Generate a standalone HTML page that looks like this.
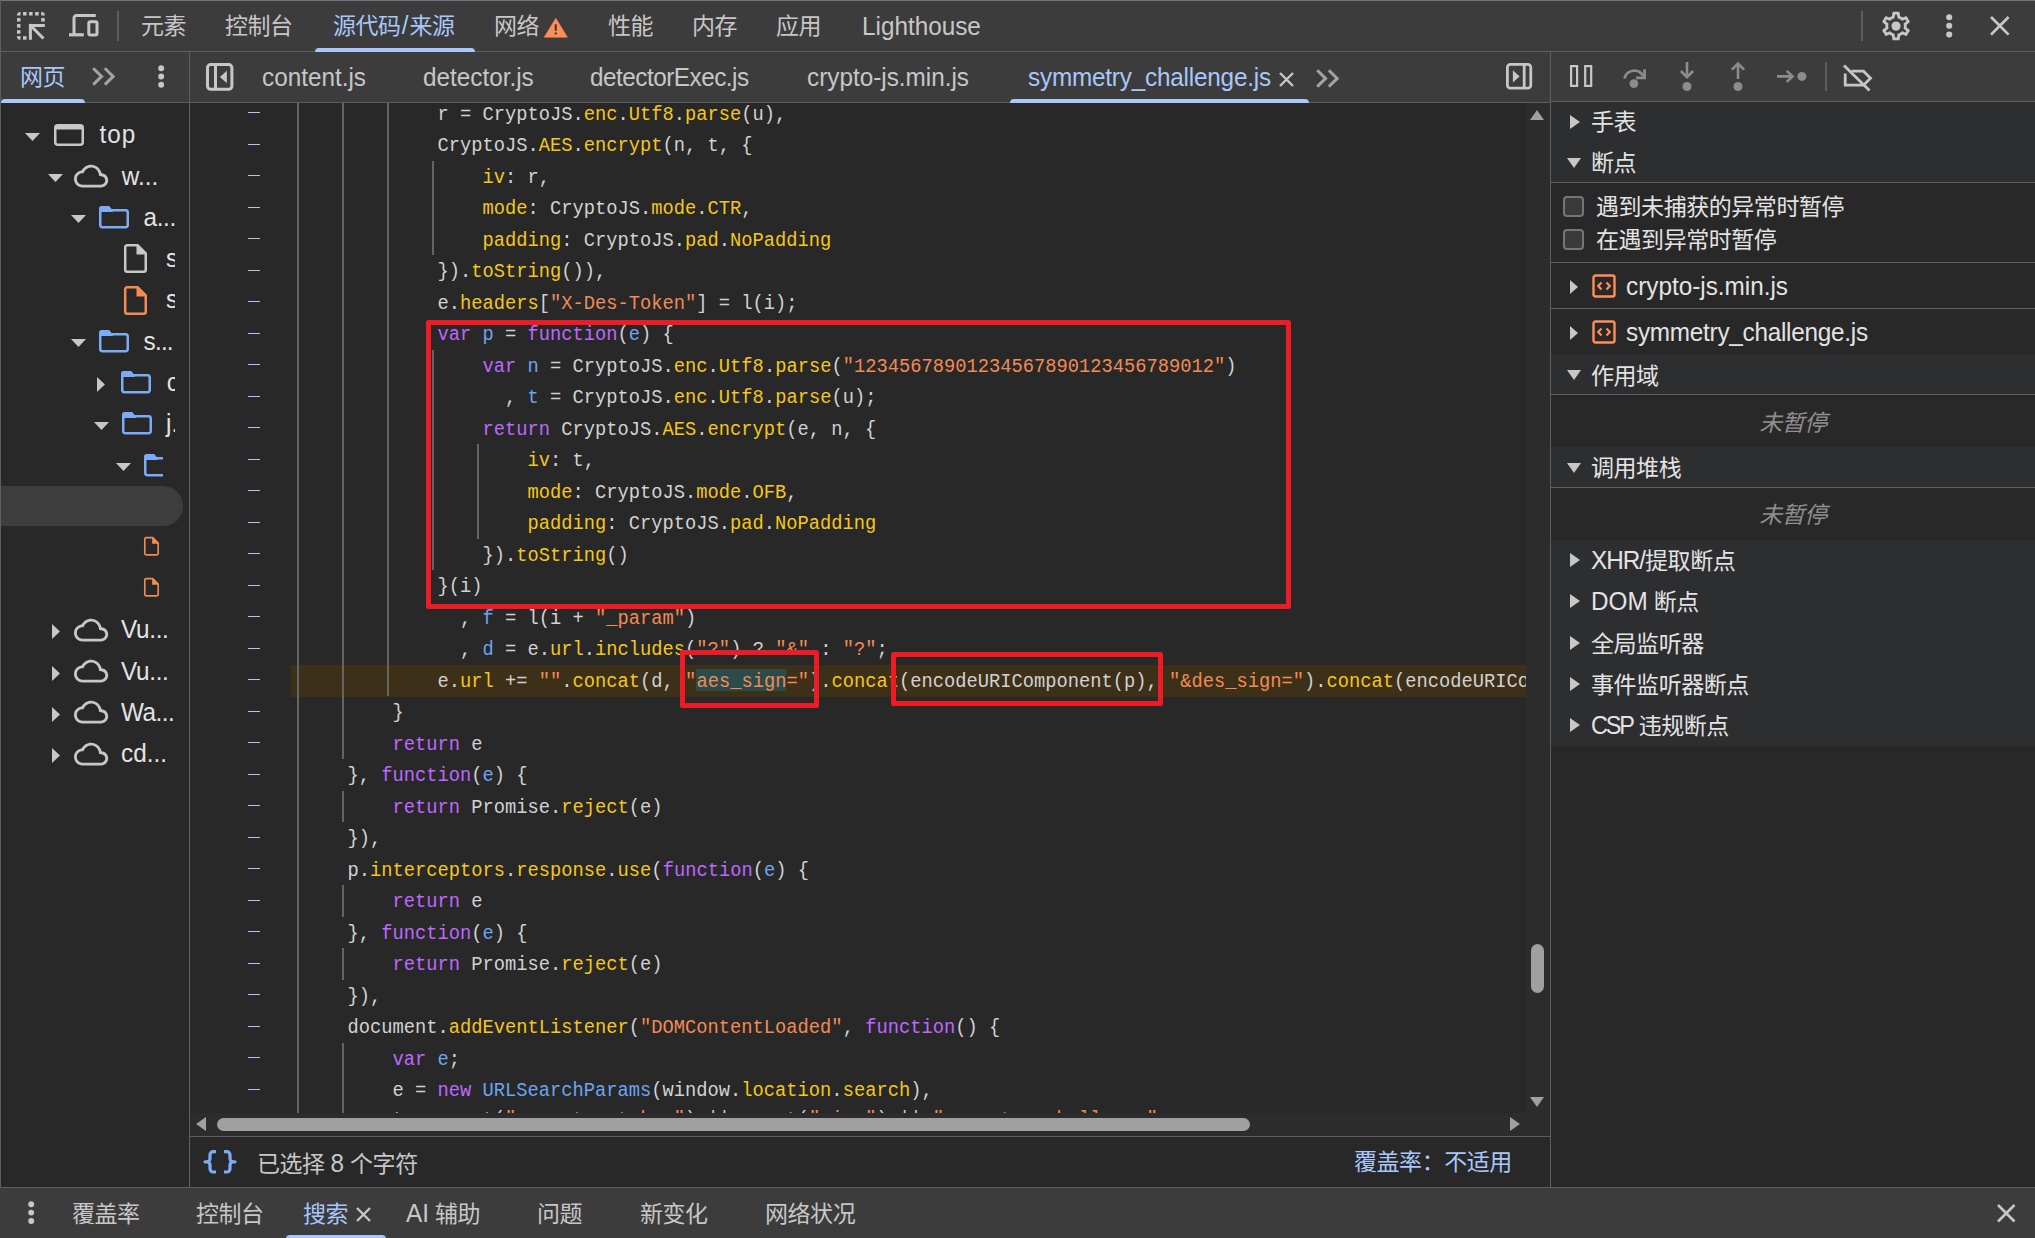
<!DOCTYPE html>
<html lang="zh-CN">
<head>
<meta charset="utf-8">
<title>DevTools</title>
<style>
*{box-sizing:border-box;margin:0;padding:0}
html,body{width:2035px;height:1238px;overflow:hidden;background:#282828}
body{position:relative;letter-spacing:-0.45px;font-family:"Liberation Sans","Noto Sans CJK SC",sans-serif;color:#e3e3e3;font-size:23px}
.abs{position:absolute}
.bar{position:absolute;background:#3c3c3c}
.tx{position:absolute;white-space:nowrap;line-height:30px;height:30px;color:#c7c7c7}
.tx b,.rt b{font-weight:400;font-size:24.3px;letter-spacing:0;display:inline-block;transform:scaleY(1.07);transform-origin:0 23.4px;line-height:30px}
.la,.rt.la{font-size:24.3px;letter-spacing:0;margin-top:1px;transform:scaleY(1.07);transform-origin:0 23.4px}
.sel{color:#a8c7fa}
.vline{position:absolute;width:1px;background:#5e5e5e}
.hline{position:absolute;height:1px;background:#5e5e5e}
svg{position:absolute;overflow:visible}
/* code */
#code{letter-spacing:0;position:absolute;left:291px;top:103px;width:1235px;height:1010px;overflow:hidden;font-family:"Liberation Mono",monospace;font-size:18.75px;color:#d2d2d2}
.ln{position:absolute;left:0;width:1235px;height:31.5px;line-height:31.5px;white-space:pre}
.ln.hl{background:#3d3019;height:32.2px}
.ln .t{position:absolute;top:2.3px;transform:scaleY(1.1);transform-origin:0 20.75px}
.g{position:absolute;top:0;width:2px;height:31.5px;background:#646464}
.k{color:#bf67ff}.p{color:#f5c71a}.s{color:#f28b54}.d{color:#6ea4f0}.h{color:#f28b54}.selbg{position:absolute;top:4.4px;height:21.8px;background:#2b4a4a}
#gutter{position:absolute;left:190px;top:103px;width:101px;height:1010px;overflow:hidden}
.dash{position:absolute;left:58.3px;width:11.4px;height:1.3px;background:#a8c7fa}
.red{position:absolute;border:5px solid #ed1c24;border-radius:2.5px}
/* tree */
#tree{position:absolute;left:1px;top:103px;width:174px;height:1084px;overflow:hidden}
.tr{position:absolute;left:0;height:41px;width:300px}
.tt{transform:scaleY(1.07);transform-origin:0 23.4px;letter-spacing:0;position:absolute;line-height:30px;font-size:24.3px;color:#e3e3e3;white-space:nowrap}
/* right */
.hd{position:absolute;left:1551px;width:484px;background:#2d2e30}
.rt{margin-top:0.7px;position:absolute;white-space:nowrap;line-height:30px;height:30px;color:#e3e3e3;font-size:23px}
.np{margin-top:0.7px;position:absolute;left:1551px;width:484px;text-align:center;font-style:italic;color:#8f8f8f;line-height:30px;font-size:23px}
.tri{position:absolute;width:0;height:0}
.tri.r{border-top:7.2px solid transparent;border-bottom:7.2px solid transparent;border-left:10.5px solid #c7c7c7}
.tri.r.n{border-top:7.5px solid transparent;border-bottom:7.5px solid transparent;border-left:8px solid #c7c7c7}
.tri.dn{border-left:7.2px solid transparent;border-right:7.2px solid transparent;border-top:10.3px solid #c7c7c7}
.cb{position:absolute;width:21px;height:21px;border:2px solid #757575;border-radius:4px;background:#3a3a3a}
</style>
</head>
<body>
<!-- top toolbar -->
<div class="bar" style="left:0;top:0;width:2035px;height:52px"></div>
<div class="hline" style="left:0;top:51px;width:2035px"></div>
<div class="hline" style="left:0;top:0;width:2035px;background:#70727f"></div>
<div class="tx" style="left:141px;top:11px">元素</div>
<div class="tx" style="left:225px;top:11px">控制台</div>
<div class="tx sel" style="left:333px;top:11px">源代码<b style="margin:0 1px">/</b>来源</div>
<div class="tx" style="left:494px;top:11px">网络</div>
<div class="tx" style="left:608px;top:11px">性能</div>
<div class="tx" style="left:692px;top:11px">内存</div>
<div class="tx" style="left:776px;top:11px">应用</div>
<div class="tx la" style="left:862px;top:11px">Lighthouse</div>
<div class="abs" style="left:315px;top:48px;width:160px;height:4px;background:#a8c7fa;border-radius:4px 4px 0 0"></div>
<div class="vline" style="left:117px;top:11px;height:30px;width:2px"></div>
<div class="vline" style="left:1861px;top:11px;height:30px;width:2px"></div>
<svg style="left:17.1px;top:12.3px" width="28" height="28" viewBox="0 0 28 28"><rect x="0.00" y="0.00" width="3.5" height="3.5" fill="#c7c7c7"/><rect x="6.05" y="0.00" width="3.5" height="3.5" fill="#c7c7c7"/><rect x="12.10" y="0.00" width="3.5" height="3.5" fill="#c7c7c7"/><rect x="18.15" y="0.00" width="3.5" height="3.5" fill="#c7c7c7"/><rect x="24.20" y="0.00" width="3.5" height="3.5" fill="#c7c7c7"/><rect x="0.00" y="6.05" width="3.5" height="3.5" fill="#c7c7c7"/><rect x="0.00" y="12.10" width="3.5" height="3.5" fill="#c7c7c7"/><rect x="0.00" y="18.15" width="3.5" height="3.5" fill="#c7c7c7"/><rect x="0.00" y="24.20" width="3.5" height="3.5" fill="#c7c7c7"/><rect x="24.20" y="6.05" width="3.5" height="3.5" fill="#c7c7c7"/><rect x="6.05" y="24.20" width="3.5" height="3.5" fill="#c7c7c7"/><path d="M0 0h2L0 2zM27.70 0h-2l2 2zM0 27.70v-2l2 2z" fill="#3c3c3c"/><path d="M13.4 13.4H27.8M13.4 13.4V27.8M14 14L26.5 26.5" stroke="#c7c7c7" stroke-width="3" fill="none" stroke-linecap="butt"/><rect x="11.9" y="11.9" width="3" height="3" fill="#c7c7c7"/></svg>
<svg style="left:68.7px;top:14px" width="30" height="23" viewBox="0 0 30 23"><path d="M26.8 1.5H7.5a2.5 2.5 0 0 0-2.5 2.5V20.8" stroke="#c7c7c7" stroke-width="3" fill="none"/><rect x="0" y="19.2" width="14.8" height="3.2" fill="#c7c7c7"/><rect x="19.8" y="7.7" width="8.2" height="13.2" rx="1.5" stroke="#c7c7c7" stroke-width="3" fill="none"/></svg>
<svg style="left:544.3px;top:17.9px" width="23.6" height="19.2" viewBox="0 0 23.6 19.2"><path d="M11.8 0.3L23.4 19.2H0.2z" fill="#fe8d59" stroke="#fe8d59" stroke-width="0.6" stroke-linejoin="round"/><rect x="10.7" y="6.3" width="2.1" height="6.6" fill="#3c3c3c"/><rect x="10.7" y="14.4" width="2.1" height="2.2" fill="#3c3c3c"/></svg>
<svg style="left:1879.46px;top:8.86px" width="34.08" height="34.08" viewBox="0 0 24 24"><path d="M19.43 12.98c.04-.32.07-.64.07-.98 0-.34-.03-.66-.07-.98l2.11-1.65c.19-.15.24-.42.12-.64l-2-3.46c-.09-.16-.26-.25-.44-.25-.06 0-.12.01-.17.03l-2.49 1c-.52-.4-1.08-.73-1.69-.98l-.38-2.65C14.46 2.18 14.25 2 14 2h-4c-.25 0-.46.18-.49.42l-.38 2.65c-.61.25-1.17.59-1.69.98l-2.49-1c-.06-.02-.12-.03-.18-.03-.17 0-.34.09-.43.25l-2 3.46c-.13.22-.07.49.12.64l2.11 1.65c-.04.32-.07.65-.07.98 0 .33.03.66.07.98l-2.11 1.65c-.19.15-.24.42-.12.64l2 3.46c.09.16.26.25.44.25.06 0 .12-.01.17-.03l2.49-1c.52.4 1.08.73 1.69.98l.38 2.65c.03.24.24.42.49.42h4c.25 0 .46-.18.49-.42l.38-2.65c.61-.25 1.17-.59 1.69-.98l2.49 1c.06.02.12.03.18.03.17 0 .34-.09.43-.25l2-3.46c.12-.22.07-.49-.12-.64l-2.11-1.65zm-1.98-1.71c.04.31.05.52.05.73 0 .21-.02.43-.05.73l-.14 1.13.89.7 1.08.84-.7 1.21-1.27-.51-1.04-.42-.9.68c-.43.32-.84.56-1.25.73l-1.06.43-.16 1.13-.2 1.35h-1.4l-.19-1.35-.16-1.13-1.06-.43c-.43-.18-.83-.41-1.23-.71l-.91-.7-1.06.43-1.27.51-.7-1.21 1.08-.84.89-.7-.14-1.13c-.03-.31-.05-.54-.05-.74s.02-.43.05-.73l.14-1.13-.89-.7-1.08-.84.7-1.21 1.27.51 1.04.42.9-.68c.43-.32.84-.56 1.25-.73l1.06-.43.16-1.13.2-1.35h1.39l.19 1.35.16 1.13 1.06.43c.43.18.83.41 1.23.71l.91.7 1.06-.43 1.27-.51.7 1.21-1.07.85-.89.7.14 1.13z" fill="#c7c7c7"/><circle cx="12" cy="12" r="3.25" fill="#c7c7c7"/></svg>
<svg style="left:1945.7px;top:14.1px" width="6.4" height="24" viewBox="0 0 6.4 24"><circle cx="3.2" cy="3.2" r="3.05" fill="#c7c7c7"/><circle cx="3.2" cy="11.85" r="3.05" fill="#c7c7c7"/><circle cx="3.2" cy="20.6" r="3.05" fill="#c7c7c7"/></svg>
<svg style="left:1990px;top:16.2px" width="19.6" height="19.6" viewBox="0 0 19.6 19.6"><path d="M1 1L18.6 18.6M18.6 1L1 18.6" stroke="#c7c7c7" stroke-width="2.7"/></svg>

<!-- second row -->
<div class="bar" style="left:0;top:52px;width:2035px;height:50px"></div>
<div class="hline" style="left:0;top:102px;width:2035px"></div>
<div class="tx sel" style="left:20px;top:62px">网页</div>
<div class="abs" style="left:1px;top:99px;width:84px;height:4px;background:#a8c7fa;border-radius:4px 4px 0 0"></div>
<div class="tx la" style="left:262px;top:62px">content.js</div>
<div class="tx la" style="left:423px;top:62px">detector.js</div>
<div class="tx la" style="left:590px;top:62px;letter-spacing:-0.5px">detectorExec.js</div>
<div class="tx la" style="left:807px;top:62px">crypto-js.min.js</div>
<div class="tx la sel" style="left:1028px;top:62px;letter-spacing:-0.2px">symmetry_challenge.js</div>
<div class="abs" style="left:1010px;top:99px;width:299px;height:4px;background:#a8c7fa;border-radius:4px 4px 0 0"></div>
<svg style="left:92.3px;top:67.3px" width="23" height="19" viewBox="0 0 23 19"><path d="M1.2 1.2L9.6 9.4 1.2 17.6M12.8 1.2L21.2 9.4 12.8 17.6" stroke="#a3a3a3" stroke-width="3" fill="none"/></svg>
<svg style="left:1316.3px;top:68.8px" width="23" height="19" viewBox="0 0 23 19"><path d="M1.2 1.2L9.6 9.4 1.2 17.6M12.8 1.2L21.2 9.4 12.8 17.6" stroke="#a3a3a3" stroke-width="3" fill="none"/></svg>
<svg style="left:158.3px;top:65px" width="6.4" height="23" viewBox="0 0 6.4 23"><circle cx="3.2" cy="3.2" r="2.95" fill="#c7c7c7"/><circle cx="3.2" cy="11.5" r="2.95" fill="#c7c7c7"/><circle cx="3.2" cy="19.7" r="2.95" fill="#c7c7c7"/></svg>
<svg style="left:206.1px;top:63px" width="27.4" height="27.8" viewBox="0 0 27.4 27.8"><rect x="1.5" y="1.5" width="24.4" height="24.8" rx="3.2" stroke="#c7c7c7" stroke-width="3" fill="none"/><path d="M9.5 1.5V26" stroke="#c7c7c7" stroke-width="3"/><path d="M20.9 7.7V20.2L13.9 14z" fill="#c7c7c7"/></svg>
<svg style="left:1506.1px;top:63.2px" width="26.2" height="26.6" viewBox="0 0 26.2 26.6"><rect x="1.4" y="1.4" width="23.4" height="23.8" rx="3" stroke="#c7c7c7" stroke-width="2.8" fill="none"/><path d="M18.2 1.5V25" stroke="#c7c7c7" stroke-width="2.8"/><path d="M6.9 7.2V19.6L13.6 13.4z" fill="#c7c7c7"/></svg>
<svg style="left:1278.6px;top:71.6px" width="15" height="15" viewBox="0 0 15 15"><path d="M1 1L14 14M14 1L1 14" stroke="#c7c7c7" stroke-width="2.4"/></svg>
<svg style="left:1570.2px;top:65.4px" width="22.4" height="22" viewBox="0 0 22.4 22"><rect x="1.1" y="1.1" width="6" height="19.8" stroke="#c7c7c7" stroke-width="2.2" fill="none"/><rect x="15.2" y="1.1" width="6" height="19.8" stroke="#c7c7c7" stroke-width="2.2" fill="none"/></svg>
<svg style="left:1622.6px;top:66.5px" width="23" height="21" viewBox="0 0 23 21"><path d="M1.5 11.5A10 10 0 0 1 20.2 9.2" stroke="#8c8c8c" stroke-width="2.7" fill="none"/><path d="M21.6 2.2V10.8H13" stroke="#8c8c8c" stroke-width="2.7" fill="none"/><circle cx="10.9" cy="16.6" r="4.4" fill="#8c8c8c"/></svg>
<svg style="left:1679.6px;top:61.9px" width="14" height="29" viewBox="0 0 14 29"><path d="M7 0V15M0.9 9L7 15.2 13.1 9" stroke="#8c8c8c" stroke-width="2.6" fill="none"/><circle cx="7" cy="24.5" r="4.5" fill="#8c8c8c"/></svg>
<svg style="left:1731.4px;top:61.9px" width="14" height="29" viewBox="0 0 14 29"><path d="M7 17V1.5M0.9 7.7L7 1.5 13.1 7.7" stroke="#8c8c8c" stroke-width="2.6" fill="none"/><circle cx="7" cy="24.5" r="4.5" fill="#8c8c8c"/></svg>
<svg style="left:1776.6px;top:70.2px" width="30" height="13" viewBox="0 0 30 13"><path d="M0 6.4H15.5M9.7 0.9L15.6 6.4 9.7 11.9" stroke="#8c8c8c" stroke-width="2.6" fill="none"/><circle cx="24.9" cy="6.4" r="4.5" fill="#8c8c8c"/></svg>
<div class="vline" style="left:1825px;top:62px;height:29px;width:2px"></div>
<svg style="left:1843.4px;top:63.5px" width="30" height="28" viewBox="0 0 30 28"><path d="M8.5 7.2H20.5L27.5 14.2 20.5 21.2H2.2V9.5" stroke="#c7c7c7" stroke-width="2.8" fill="none" stroke-linejoin="miter"/><path d="M1 1.5L26.5 26.5" stroke="#c7c7c7" stroke-width="2.8"/></svg>

<!-- panel separators -->
<div class="vline" style="left:189px;top:52px;height:1135px"></div>
<div class="vline" style="left:1550px;top:52px;height:1135px"></div>
<div class="vline" style="left:0;top:0;width:1px;height:1238px;background:#5f5f5f"></div>

<!-- file tree -->
<div class="abs" style="left:1px;top:486px;width:181.5px;height:40px;background:#3d3d3d;border-radius:0 20px 20px 0"></div>
<div class="abs" style="left:162px;top:505px;width:1px;height:1px;background:#8a4a30"></div>
<div id="tree">
<svg style="left:24.4px;top:29.8px" width="15" height="8" viewBox="0 0 15 8"><path d="M0 0h15L7.5 8z" fill="#c7c7c7"/></svg>
<svg style="left:52.7px;top:20.6px" width="30" height="22" viewBox="0 0 30 22"><rect x="1.25" y="1.25" width="27.5" height="19.5" rx="2.5" fill="none" stroke="#c7c7c7" stroke-width="2.5"/><rect x="1" y="1" width="28" height="4.5" fill="#c7c7c7"/></svg>
<div class="tt" style="left:98.5px;top:17.2px;letter-spacing:1px">top</div>
<svg style="left:47.3px;top:71.1px" width="15" height="8" viewBox="0 0 15 8"><path d="M0 0h15L7.5 8z" fill="#c7c7c7"/></svg>
<svg style="left:72.8px;top:55.8px" width="34.2" height="34.2" viewBox="0 0 24 24"><path d="M19.35 10.04C18.67 6.59 15.64 4 12 4 9.11 4 6.6 5.64 5.35 8.04 2.34 8.36 0 10.91 0 14c0 3.31 2.69 6 6 6h13c2.76 0 5-2.24 5-5 0-2.64-2.05-4.78-4.65-4.96zM19 18H6c-2.21 0-4-1.79-4-4 0-2.05 1.53-3.76 3.56-3.97l1.07-.11.5-.95C8.08 7.14 9.94 6 12 6c2.62 0 4.88 1.86 5.39 4.43l.3 1.5 1.53.11c1.56.1 2.78 1.41 2.78 2.96 0 1.65-1.35 3-3 3z" fill="#c7c7c7"/></svg>
<div class="tt" style="left:120.7px;top:58.5px;letter-spacing:0px">w...</div>
<svg style="left:69.5px;top:112.3px" width="15" height="8" viewBox="0 0 15 8"><path d="M0 0h15L7.5 8z" fill="#c7c7c7"/></svg>
<svg style="left:97.6px;top:102.9px" width="30" height="22.4" viewBox="0 0 30 22.4"><rect x="1.25" y="4.2" width="27.5" height="16.95" rx="2.2" fill="none" stroke="#7cacf8" stroke-width="2.5"/><path d="M0 2.6A2.6 2.6 0 0 1 2.6 0h7.6l3.6 4.6V6H0z" fill="#7cacf8"/></svg>
<div class="tt" style="left:142.6px;top:99.7px;letter-spacing:-0.4px">a...</div>
<svg style="left:122.9px;top:141.2px" width="23" height="29" viewBox="0 0 23 29"><path d="M3.2 1.25h10.3l8.25 8.25v16.3a2 2 0 0 1-2 2H3.2a2 2 0 0 1-2-2V3.25a2 2 0 0 1 2-2z" fill="none" stroke="#c7c7c7" stroke-width="2.5" stroke-linejoin="round"/><path d="M12.5 0.5v10h10z" fill="#c7c7c7"/></svg>
<div class="tt" style="left:165.0px;top:141.0px;letter-spacing:0px">s</div>
<svg style="left:122.9px;top:182.5px" width="23" height="29" viewBox="0 0 23 29"><path d="M3.2 1.25h10.3l8.25 8.25v16.3a2 2 0 0 1-2 2H3.2a2 2 0 0 1-2-2V3.25a2 2 0 0 1 2-2z" fill="none" stroke="#f28b54" stroke-width="2.5" stroke-linejoin="round"/><path d="M12.5 0.5v10h10z" fill="#f28b54"/></svg>
<div class="tt" style="left:165.0px;top:182.3px;letter-spacing:0px">s</div>
<svg style="left:69.5px;top:236.2px" width="15" height="8" viewBox="0 0 15 8"><path d="M0 0h15L7.5 8z" fill="#c7c7c7"/></svg>
<svg style="left:97.6px;top:226.8px" width="30" height="22.4" viewBox="0 0 30 22.4"><rect x="1.25" y="4.2" width="27.5" height="16.95" rx="2.2" fill="none" stroke="#7cacf8" stroke-width="2.5"/><path d="M0 2.6A2.6 2.6 0 0 1 2.6 0h7.6l3.6 4.6V6H0z" fill="#7cacf8"/></svg>
<div class="tt" style="left:142.6px;top:223.6px;letter-spacing:-0.8px">s...</div>
<svg style="left:95.7px;top:273.7px" width="8" height="15" viewBox="0 0 8 15"><path d="M0 0v15l8-7.5z" fill="#c7c7c7"/></svg>
<svg style="left:120.2px;top:268.0px" width="30" height="22.4" viewBox="0 0 30 22.4"><rect x="1.25" y="4.2" width="27.5" height="16.95" rx="2.2" fill="none" stroke="#7cacf8" stroke-width="2.5"/><path d="M0 2.6A2.6 2.6 0 0 1 2.6 0h7.6l3.6 4.6V6H0z" fill="#7cacf8"/></svg>
<div class="tt" style="left:165.8px;top:264.8px;letter-spacing:0px">c</div>
<svg style="left:93.0px;top:318.7px" width="15" height="8" viewBox="0 0 15 8"><path d="M0 0h15L7.5 8z" fill="#c7c7c7"/></svg>
<svg style="left:120.5px;top:309.3px" width="30" height="22.4" viewBox="0 0 30 22.4"><rect x="1.25" y="4.2" width="27.5" height="16.95" rx="2.2" fill="none" stroke="#7cacf8" stroke-width="2.5"/><path d="M0 2.6A2.6 2.6 0 0 1 2.6 0h7.6l3.6 4.6V6H0z" fill="#7cacf8"/></svg>
<div class="tt" style="left:165.0px;top:306.1px;letter-spacing:0px">j.</div>
<svg style="left:115.0px;top:360.0px" width="15" height="8" viewBox="0 0 15 8"><path d="M0 0h15L7.5 8z" fill="#c7c7c7"/></svg>
<div style="position:absolute;left:142.6px;top:350.6px;width:19.8px;height:23px;overflow:hidden"><svg style="left:0;top:0" width="30" height="22.4" viewBox="0 0 30 22.4"><rect x="1.25" y="4.2" width="27.5" height="16.95" rx="2.2" fill="none" stroke="#7cacf8" stroke-width="2.5"/><path d="M0 2.6A2.6 2.6 0 0 1 2.6 0h7.6l3.6 4.6V6H0z" fill="#7cacf8"/></svg></div>
<svg style="left:143.0px;top:433.2px" width="15" height="20.5" viewBox="0 0 23 29"><path d="M3.2 1.25h10.3l8.25 8.25v16.3a2 2 0 0 1-2 2H3.2a2 2 0 0 1-2-2V3.25a2 2 0 0 1 2-2z" fill="none" stroke="#f28b54" stroke-width="2.5" stroke-linejoin="round"/><path d="M12.5 0.5v10h10z" fill="#f28b54"/></svg>
<svg style="left:143.0px;top:474.4px" width="15" height="20.5" viewBox="0 0 23 29"><path d="M3.2 1.25h10.3l8.25 8.25v16.3a2 2 0 0 1-2 2H3.2a2 2 0 0 1-2-2V3.25a2 2 0 0 1 2-2z" fill="none" stroke="#f28b54" stroke-width="2.5" stroke-linejoin="round"/><path d="M12.5 0.5v10h10z" fill="#f28b54"/></svg>
<svg style="left:50.7px;top:521.3px" width="8" height="15" viewBox="0 0 8 15"><path d="M0 0v15l8-7.5z" fill="#c7c7c7"/></svg>
<svg style="left:73.0px;top:509.7px" width="34.2" height="34.2" viewBox="0 0 24 24"><path d="M19.35 10.04C18.67 6.59 15.64 4 12 4 9.11 4 6.6 5.64 5.35 8.04 2.34 8.36 0 10.91 0 14c0 3.31 2.69 6 6 6h13c2.76 0 5-2.24 5-5 0-2.64-2.05-4.78-4.65-4.96zM19 18H6c-2.21 0-4-1.79-4-4 0-2.05 1.53-3.76 3.56-3.97l1.07-.11.5-.95C8.08 7.14 9.94 6 12 6c2.62 0 4.88 1.86 5.39 4.43l.3 1.5 1.53.11c1.56.1 2.78 1.41 2.78 2.96 0 1.65-1.35 3-3 3z" fill="#c7c7c7"/></svg>
<div class="tt" style="left:120.0px;top:512.4px;letter-spacing:-0.3px">Vu...</div>
<svg style="left:50.7px;top:562.6px" width="8" height="15" viewBox="0 0 8 15"><path d="M0 0v15l8-7.5z" fill="#c7c7c7"/></svg>
<svg style="left:73.0px;top:551.0px" width="34.2" height="34.2" viewBox="0 0 24 24"><path d="M19.35 10.04C18.67 6.59 15.64 4 12 4 9.11 4 6.6 5.64 5.35 8.04 2.34 8.36 0 10.91 0 14c0 3.31 2.69 6 6 6h13c2.76 0 5-2.24 5-5 0-2.64-2.05-4.78-4.65-4.96zM19 18H6c-2.21 0-4-1.79-4-4 0-2.05 1.53-3.76 3.56-3.97l1.07-.11.5-.95C8.08 7.14 9.94 6 12 6c2.62 0 4.88 1.86 5.39 4.43l.3 1.5 1.53.11c1.56.1 2.78 1.41 2.78 2.96 0 1.65-1.35 3-3 3z" fill="#c7c7c7"/></svg>
<div class="tt" style="left:120.0px;top:553.7px;letter-spacing:-0.3px">Vu...</div>
<svg style="left:50.7px;top:603.9px" width="8" height="15" viewBox="0 0 8 15"><path d="M0 0v15l8-7.5z" fill="#c7c7c7"/></svg>
<svg style="left:73.0px;top:592.3px" width="34.2" height="34.2" viewBox="0 0 24 24"><path d="M19.35 10.04C18.67 6.59 15.64 4 12 4 9.11 4 6.6 5.64 5.35 8.04 2.34 8.36 0 10.91 0 14c0 3.31 2.69 6 6 6h13c2.76 0 5-2.24 5-5 0-2.64-2.05-4.78-4.65-4.96zM19 18H6c-2.21 0-4-1.79-4-4 0-2.05 1.53-3.76 3.56-3.97l1.07-.11.5-.95C8.08 7.14 9.94 6 12 6c2.62 0 4.88 1.86 5.39 4.43l.3 1.5 1.53.11c1.56.1 2.78 1.41 2.78 2.96 0 1.65-1.35 3-3 3z" fill="#c7c7c7"/></svg>
<div class="tt" style="left:120.0px;top:595.0px;letter-spacing:-0.5px">Wa...</div>
<svg style="left:50.7px;top:645.2px" width="8" height="15" viewBox="0 0 8 15"><path d="M0 0v15l8-7.5z" fill="#c7c7c7"/></svg>
<svg style="left:73.0px;top:633.6px" width="34.2" height="34.2" viewBox="0 0 24 24"><path d="M19.35 10.04C18.67 6.59 15.64 4 12 4 9.11 4 6.6 5.64 5.35 8.04 2.34 8.36 0 10.91 0 14c0 3.31 2.69 6 6 6h13c2.76 0 5-2.24 5-5 0-2.64-2.05-4.78-4.65-4.96zM19 18H6c-2.21 0-4-1.79-4-4 0-2.05 1.53-3.76 3.56-3.97l1.07-.11.5-.95C8.08 7.14 9.94 6 12 6c2.62 0 4.88 1.86 5.39 4.43l.3 1.5 1.53.11c1.56.1 2.78 1.41 2.78 2.96 0 1.65-1.35 3-3 3z" fill="#c7c7c7"/></svg>
<div class="tt" style="left:120.0px;top:636.3px;letter-spacing:0px">cd...</div>
</div>

<!-- editor -->
<div id="gutter"><i class="dash" style="top:9.00px"></i><i class="dash" style="top:40.50px"></i><i class="dash" style="top:72.00px"></i><i class="dash" style="top:103.50px"></i><i class="dash" style="top:135.00px"></i><i class="dash" style="top:166.50px"></i><i class="dash" style="top:198.00px"></i><i class="dash" style="top:229.50px"></i><i class="dash" style="top:261.00px"></i><i class="dash" style="top:292.50px"></i><i class="dash" style="top:324.00px"></i><i class="dash" style="top:355.50px"></i><i class="dash" style="top:387.00px"></i><i class="dash" style="top:418.50px"></i><i class="dash" style="top:450.00px"></i><i class="dash" style="top:481.50px"></i><i class="dash" style="top:513.00px"></i><i class="dash" style="top:544.50px"></i><i class="dash" style="top:576.00px"></i><i class="dash" style="top:607.50px"></i><i class="dash" style="top:639.00px"></i><i class="dash" style="top:670.50px"></i><i class="dash" style="top:702.00px"></i><i class="dash" style="top:733.50px"></i><i class="dash" style="top:765.00px"></i><i class="dash" style="top:796.50px"></i><i class="dash" style="top:828.00px"></i><i class="dash" style="top:859.50px"></i><i class="dash" style="top:891.00px"></i><i class="dash" style="top:922.50px"></i><i class="dash" style="top:954.00px"></i><i class="dash" style="top:985.50px"></i><i class="dash" style="top:1017.00px"></i></div>
<div id="code">
<div class="ln" style="top:-5.40px"><i class="g" style="left:6.0px"></i><i class="g" style="left:51.0px"></i><i class="g" style="left:96.0px"></i><span class="t" style="left:146.50px">r = CryptoJS.<span class="p">enc</span>.<span class="p">Utf8</span>.<span class="p">parse</span>(u),</span></div>
<div class="ln" style="top:26.10px"><i class="g" style="left:6.0px"></i><i class="g" style="left:51.0px"></i><i class="g" style="left:96.0px"></i><span class="t" style="left:146.50px">CryptoJS.<span class="p">AES</span>.<span class="p">encrypt</span>(n, t, {</span></div>
<div class="ln" style="top:57.60px"><i class="g" style="left:6.0px"></i><i class="g" style="left:51.0px"></i><i class="g" style="left:96.0px"></i><i class="g" style="left:141.0px"></i><span class="t" style="left:191.50px"><span class="p">iv</span>: r,</span></div>
<div class="ln" style="top:89.10px"><i class="g" style="left:6.0px"></i><i class="g" style="left:51.0px"></i><i class="g" style="left:96.0px"></i><i class="g" style="left:141.0px"></i><span class="t" style="left:191.50px"><span class="p">mode</span>: CryptoJS.<span class="p">mode</span>.<span class="p">CTR</span>,</span></div>
<div class="ln" style="top:120.60px"><i class="g" style="left:6.0px"></i><i class="g" style="left:51.0px"></i><i class="g" style="left:96.0px"></i><i class="g" style="left:141.0px"></i><span class="t" style="left:191.50px"><span class="p">padding</span>: CryptoJS.<span class="p">pad</span>.<span class="p">NoPadding</span></span></div>
<div class="ln" style="top:152.10px"><i class="g" style="left:6.0px"></i><i class="g" style="left:51.0px"></i><i class="g" style="left:96.0px"></i><span class="t" style="left:146.50px">}).<span class="p">toString</span>()),</span></div>
<div class="ln" style="top:183.60px"><i class="g" style="left:6.0px"></i><i class="g" style="left:51.0px"></i><i class="g" style="left:96.0px"></i><span class="t" style="left:146.50px">e.<span class="p">headers</span>[<span class="s">"X-Des-Token"</span>] = l(i);</span></div>
<div class="ln" style="top:215.10px"><i class="g" style="left:6.0px"></i><i class="g" style="left:51.0px"></i><i class="g" style="left:96.0px"></i><span class="t" style="left:146.50px"><span class="k">var</span> <span class="d">p</span> = <span class="k">function</span>(<span class="d">e</span>) {</span></div>
<div class="ln" style="top:246.60px"><i class="g" style="left:6.0px"></i><i class="g" style="left:51.0px"></i><i class="g" style="left:96.0px"></i><i class="g" style="left:141.0px"></i><span class="t" style="left:191.50px"><span class="k">var</span> <span class="d">n</span> = CryptoJS.<span class="p">enc</span>.<span class="p">Utf8</span>.<span class="p">parse</span>(<span class="s">"12345678901234567890123456789012"</span>)</span></div>
<div class="ln" style="top:278.10px"><i class="g" style="left:6.0px"></i><i class="g" style="left:51.0px"></i><i class="g" style="left:96.0px"></i><i class="g" style="left:141.0px"></i><span class="t" style="left:191.50px">  , <span class="d">t</span> = CryptoJS.<span class="p">enc</span>.<span class="p">Utf8</span>.<span class="p">parse</span>(u);</span></div>
<div class="ln" style="top:309.60px"><i class="g" style="left:6.0px"></i><i class="g" style="left:51.0px"></i><i class="g" style="left:96.0px"></i><i class="g" style="left:141.0px"></i><span class="t" style="left:191.50px"><span class="k">return</span> CryptoJS.<span class="p">AES</span>.<span class="p">encrypt</span>(e, n, {</span></div>
<div class="ln" style="top:341.10px"><i class="g" style="left:6.0px"></i><i class="g" style="left:51.0px"></i><i class="g" style="left:96.0px"></i><i class="g" style="left:141.0px"></i><i class="g" style="left:186.0px"></i><span class="t" style="left:236.50px"><span class="p">iv</span>: t,</span></div>
<div class="ln" style="top:372.60px"><i class="g" style="left:6.0px"></i><i class="g" style="left:51.0px"></i><i class="g" style="left:96.0px"></i><i class="g" style="left:141.0px"></i><i class="g" style="left:186.0px"></i><span class="t" style="left:236.50px"><span class="p">mode</span>: CryptoJS.<span class="p">mode</span>.<span class="p">OFB</span>,</span></div>
<div class="ln" style="top:404.10px"><i class="g" style="left:6.0px"></i><i class="g" style="left:51.0px"></i><i class="g" style="left:96.0px"></i><i class="g" style="left:141.0px"></i><i class="g" style="left:186.0px"></i><span class="t" style="left:236.50px"><span class="p">padding</span>: CryptoJS.<span class="p">pad</span>.<span class="p">NoPadding</span></span></div>
<div class="ln" style="top:435.60px"><i class="g" style="left:6.0px"></i><i class="g" style="left:51.0px"></i><i class="g" style="left:96.0px"></i><i class="g" style="left:141.0px"></i><span class="t" style="left:191.50px">}).<span class="p">toString</span>()</span></div>
<div class="ln" style="top:467.10px"><i class="g" style="left:6.0px"></i><i class="g" style="left:51.0px"></i><i class="g" style="left:96.0px"></i><span class="t" style="left:146.50px">}(i)</span></div>
<div class="ln" style="top:498.60px"><i class="g" style="left:6.0px"></i><i class="g" style="left:51.0px"></i><i class="g" style="left:96.0px"></i><span class="t" style="left:146.50px">  , <span class="d">f</span> = l(i + <span class="s">"_param"</span>)</span></div>
<div class="ln" style="top:530.10px"><i class="g" style="left:6.0px"></i><i class="g" style="left:51.0px"></i><i class="g" style="left:96.0px"></i><span class="t" style="left:146.50px">  , <span class="d">d</span> = e.<span class="p">url</span>.<span class="p">includes</span>(<span class="s">"?"</span>) ? <span class="s">"&amp;"</span> : <span class="s">"?"</span>;</span></div>
<div class="ln hl" style="top:561.60px"><i class="g" style="left:6.0px"></i><i class="g" style="left:51.0px"></i><i class="g" style="left:96.0px"></i><i class="selbg" style="left:405.25px;width:90px"></i><span class="t" style="left:146.50px">e.<span class="p">url</span> += <span class="s">""</span>.<span class="p">concat</span>(d, <span class="s">"</span><span class="h">aes_sign</span><span class="s">="</span>).<span class="p">concat</span>(encodeURIComponent(p), <span class="s">"&amp;des_sign="</span>).<span class="p">concat</span>(encodeURIComponent(f))</span></div>
<div class="ln" style="top:593.10px"><i class="g" style="left:6.0px"></i><i class="g" style="left:51.0px"></i><span class="t" style="left:101.50px">}</span></div>
<div class="ln" style="top:624.60px"><i class="g" style="left:6.0px"></i><i class="g" style="left:51.0px"></i><span class="t" style="left:101.50px"><span class="k">return</span> e</span></div>
<div class="ln" style="top:656.10px"><i class="g" style="left:6.0px"></i><span class="t" style="left:56.50px">}, <span class="k">function</span>(<span class="d">e</span>) {</span></div>
<div class="ln" style="top:687.60px"><i class="g" style="left:6.0px"></i><i class="g" style="left:51.0px"></i><span class="t" style="left:101.50px"><span class="k">return</span> Promise.<span class="p">reject</span>(e)</span></div>
<div class="ln" style="top:719.10px"><i class="g" style="left:6.0px"></i><span class="t" style="left:56.50px">}),</span></div>
<div class="ln" style="top:750.60px"><i class="g" style="left:6.0px"></i><span class="t" style="left:56.50px">p.<span class="p">interceptors</span>.<span class="p">response</span>.<span class="p">use</span>(<span class="k">function</span>(<span class="d">e</span>) {</span></div>
<div class="ln" style="top:782.10px"><i class="g" style="left:6.0px"></i><i class="g" style="left:51.0px"></i><span class="t" style="left:101.50px"><span class="k">return</span> e</span></div>
<div class="ln" style="top:813.60px"><i class="g" style="left:6.0px"></i><span class="t" style="left:56.50px">}, <span class="k">function</span>(<span class="d">e</span>) {</span></div>
<div class="ln" style="top:845.10px"><i class="g" style="left:6.0px"></i><i class="g" style="left:51.0px"></i><span class="t" style="left:101.50px"><span class="k">return</span> Promise.<span class="p">reject</span>(e)</span></div>
<div class="ln" style="top:876.60px"><i class="g" style="left:6.0px"></i><span class="t" style="left:56.50px">}),</span></div>
<div class="ln" style="top:908.10px"><i class="g" style="left:6.0px"></i><span class="t" style="left:56.50px">document.<span class="p">addEventListener</span>(<span class="s">"DOMContentLoaded"</span>, <span class="k">function</span>() {</span></div>
<div class="ln" style="top:939.60px"><i class="g" style="left:6.0px"></i><i class="g" style="left:51.0px"></i><span class="t" style="left:101.50px"><span class="k">var</span> <span class="d">e</span>;</span></div>
<div class="ln" style="top:971.10px"><i class="g" style="left:6.0px"></i><i class="g" style="left:51.0px"></i><span class="t" style="left:101.50px">e = <span class="k">new</span> <span class="d">URLSearchParams</span>(window.<span class="p">location</span>.<span class="p">search</span>),</span></div>
<div class="ln" style="top:1002.60px"><i class="g" style="left:6.0px"></i><i class="g" style="left:51.0px"></i><span class="t" style="left:101.50px;top:-0.9px">t = e.<span class="p">get</span>(<span class="s">"symmetry_token"</span>) || e.<span class="p">get</span>(<span class="s">"sign"</span>) || <span class="s">"symmetry_challenge"</span>;</span></div>
</div>
<div class="red" style="left:426px;top:320px;width:864.5px;height:289px;border-width:5.2px"></div>
<div class="red" style="left:680px;top:650.2px;width:138.6px;height:57.7px"></div>
<div class="red" style="left:890.7px;top:651.7px;width:272.1px;height:54.1px"></div>

<!-- scrollbars -->
<div class="abs" style="left:1526px;top:103px;width:24px;height:1010px;background:#2c2c2c"></div>
<div class="abs" style="left:1531px;top:944px;width:13px;height:49px;background:#a0a0a0;border-radius:7px"></div>
<div class="tri" style="left:1530px;top:110px;border-left:7.5px solid transparent;border-right:7.5px solid transparent;border-bottom:10px solid #a0a0a0"></div>
<div class="tri" style="left:1530px;top:1097px;border-left:7.5px solid transparent;border-right:7.5px solid transparent;border-top:10px solid #a0a0a0"></div>
<div class="abs" style="left:190px;top:1113px;width:1360px;height:24px;background:#2c2c2c"></div>
<div class="abs" style="left:217px;top:1118px;width:1033px;height:13px;background:#a0a0a0;border-radius:7px"></div>
<div class="tri" style="left:196px;top:1117px;border-top:7.5px solid transparent;border-bottom:7.5px solid transparent;border-right:10px solid #a0a0a0"></div>
<div class="tri" style="left:1510px;top:1117px;border-top:7.5px solid transparent;border-bottom:7.5px solid transparent;border-left:10px solid #a0a0a0"></div>

<!-- status bar -->
<div class="hline" style="left:190px;top:1136px;width:1360px"></div>
<div class="tx" style="left:257px;top:1148.6px;color:#c7c7c7">已选择 <b>8</b> 个字符</div>
<div class="tx sel" style="left:1354px;top:1146.9px">覆盖率：不适用</div>

<!-- right panel -->
<div class="hd" style="top:102px;height:80px"></div>
<div class="hline" style="left:1551px;top:101px;width:484px"></div>
<div class="abs" style="left:1551px;top:102px;width:484px;height:1px;background:#2d2e30"></div>
<div class="hline" style="left:1551px;top:182px;width:484px"></div>
<div class="tri r" style="left:1570px;top:115.1px"></div>
<div class="rt" style="left:1591px;top:106px">手表</div>
<div class="tri dn" style="left:1567px;top:158px"></div>
<div class="rt" style="left:1591px;top:147px">断点</div>
<div class="cb" style="left:1563px;top:196px"></div>
<div class="rt" style="left:1596px;top:191px">遇到未捕获的异常时暂停</div>
<div class="cb" style="left:1563px;top:229px"></div>
<div class="rt" style="left:1596px;top:224px">在遇到异常时暂停</div>
<div class="hline" style="left:1551px;top:262px;width:484px"></div>
<div class="tri r n" style="left:1570px;top:280px"></div>
<svg style="left:1592px;top:274px" width="24" height="24" viewBox="0 0 24 24"><rect x="1.5" y="1.5" width="21" height="21" rx="2" fill="none" stroke="#fe8d59" stroke-width="2.4"/><path d="M9.5 8.6 6.2 12l3.3 3.4M14.5 8.6l3.3 3.4-3.3 3.4" fill="none" stroke="#fe8d59" stroke-width="2.2"/></svg>
<div class="rt la" style="left:1626px;top:271px">crypto-js.min.js</div>
<div class="hline" style="left:1551px;top:308px;width:484px"></div>
<div class="tri r n" style="left:1570px;top:326px"></div>
<svg style="left:1592px;top:320px" width="24" height="24" viewBox="0 0 24 24"><rect x="1.5" y="1.5" width="21" height="21" rx="2" fill="none" stroke="#fe8d59" stroke-width="2.4"/><path d="M9.5 8.6 6.2 12l3.3 3.4M14.5 8.6l3.3 3.4-3.3 3.4" fill="none" stroke="#fe8d59" stroke-width="2.2"/></svg>
<div class="rt la" style="left:1626px;top:317px;letter-spacing:-0.25px">symmetry_challenge.js</div>
<div class="hd" style="top:354px;height:40px"></div>
<div class="hline" style="left:1551px;top:394px;width:484px"></div>
<div class="tri dn" style="left:1567px;top:370.2px"></div>
<div class="rt" style="left:1591px;top:360px">作用域</div>
<div class="np" style="top:407px">未暂停</div>
<div class="hd" style="top:447px;height:40px"></div>
<div class="hline" style="left:1551px;top:487px;width:484px"></div>
<div class="tri dn" style="left:1567px;top:463px"></div>
<div class="rt" style="left:1591px;top:452px">调用堆栈</div>
<div class="np" style="top:499px">未暂停</div>
<div class="hd" style="top:540px;height:206px"></div>
<div class="tri r" style="left:1570px;top:553px"></div>
<div class="rt" style="left:1591px;top:545px"><b style="letter-spacing:-1px">XHR/</b>提取断点</div>
<div class="tri r" style="left:1570px;top:594px"></div>
<div class="rt" style="left:1591px;top:586px"><b>DOM</b> 断点</div>
<div class="tri r" style="left:1570px;top:636px"></div>
<div class="rt" style="left:1591px;top:628px">全局监听器</div>
<div class="tri r" style="left:1570px;top:677px"></div>
<div class="rt" style="left:1591px;top:669px">事件监听器断点</div>
<div class="tri r" style="left:1570px;top:718px"></div>
<div class="rt" style="left:1591px;top:710px"><b style="letter-spacing:-2.2px;font-size:23.5px">CSP</b> 违规断点</div>


<!-- drawer -->
<div class="bar" style="left:0;top:1188px;width:2035px;height:50px"></div>
<div class="hline" style="left:0;top:1187px;width:2035px"></div>
<div class="tx" style="left:72px;top:1199px">覆盖率</div>
<div class="tx" style="left:196px;top:1199px">控制台</div>
<div class="tx sel" style="left:303px;top:1199px">搜索</div>
<div class="tx" style="left:406px;top:1199px"><b>AI</b> 辅助</div>
<div class="tx" style="left:537px;top:1199px">问题</div>
<div class="tx" style="left:640px;top:1199px">新变化</div>
<div class="tx" style="left:765px;top:1199px">网络状况</div>
<div class="abs" style="left:285.5px;top:1235px;width:100.5px;height:4px;background:#a8c7fa;border-radius:4px 4px 0 0"></div>
<svg style="left:27.5px;top:1201.3px" width="6.4" height="24" viewBox="0 0 6.4 24"><circle cx="3.2" cy="3.2" r="2.95" fill="#c7c7c7"/><circle cx="3.2" cy="11.6" r="2.95" fill="#c7c7c7"/><circle cx="3.2" cy="20" r="2.95" fill="#c7c7c7"/></svg>
<svg style="left:355.8px;top:1206.6px" width="15" height="15" viewBox="0 0 15 15"><path d="M1 1L14 14M14 1L1 14" stroke="#c7c7c7" stroke-width="2.4"/></svg>
<svg style="left:1996.5px;top:1203.5px" width="18.5" height="18.5" viewBox="0 0 18.5 18.5"><path d="M1 1L17.5 17.5M17.5 1L1 17.5" stroke="#c7c7c7" stroke-width="2.6"/></svg>
<svg style="left:204px;top:1150.4px" width="32" height="23.6" viewBox="0 0 32 23.6"><path d="M12 1.6H9.2a3.2 3.2 0 0 0-3.2 3.2v3.8a3.2 3.2 0 0 1-3.2 3.2H1a0 0 0 0 1 0 0H2.8a3.2 3.2 0 0 1 3.2 3.2v3.8a3.2 3.2 0 0 0 3.2 3.2H12M20 1.6h2.8a3.2 3.2 0 0 1 3.2 3.2v3.8a3.2 3.2 0 0 0 3.2 3.2H31a0 0 0 0 0 0 0h-1.8a3.2 3.2 0 0 0-3.2 3.2v3.8a3.2 3.2 0 0 1-3.2 3.2H20" stroke="#7cacf8" stroke-width="3.2" fill="none" stroke-linejoin="round"/></svg>
</body>
</html>
